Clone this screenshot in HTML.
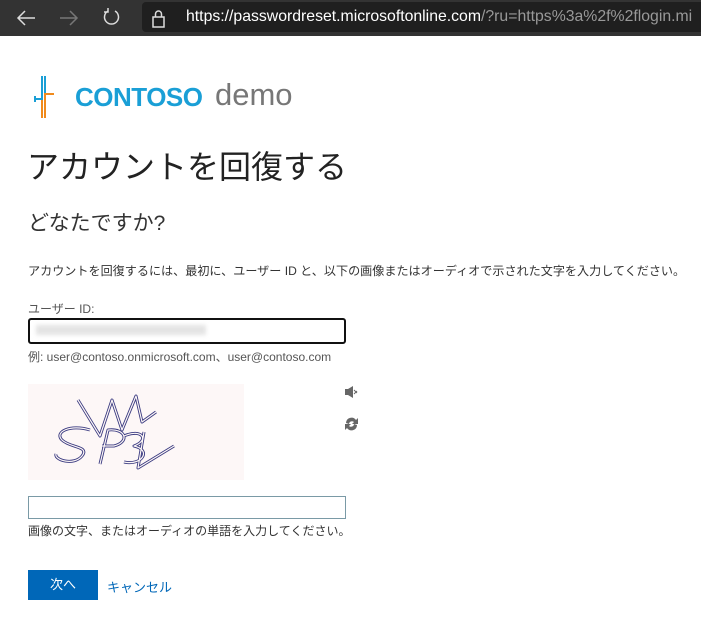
<!DOCTYPE html>
<html><head><meta charset="utf-8"><style>
body{margin:0;width:701px;height:635px;overflow:hidden;background:#fff;font-family:"Liberation Sans","Noto Sans CJK JP",sans-serif;color:#333;position:relative}
.a{position:absolute;white-space:nowrap}
</style></head><body>
<div class="a" style="left:0;top:0;width:701px;height:36px;background:#333"></div>
<div class="a" style="left:142px;top:2px;width:600px;height:30px;background:#1f1f1f;border-radius:4px"></div>
<svg class="a" style="left:0;top:0" width="180" height="36" fill="none" stroke-width="1.5">
<path d="M35 18H18M25 11l-7 7 7 7" stroke="#ddd"/>
<path d="M60 18h17M70 11l7 7-7 7" stroke="#777"/>
<path d="M108 11a7 7 0 1 0 7 0M108 8v4h-4" stroke="#ddd"/>
<rect x="153" y="17" width="11" height="10" stroke="#ddd"/><path d="M155.5 17v-3a3 3 0 0 1 6 0v3" stroke="#ddd"/>
</svg>
<div class="a" style="left:186px;top:8px;font-size:15.8px;color:#fff">https://passwordreset.microsoftonline.com<span style="color:#999">/?ru=https%3a%2f%2flogin.mi</span></div>
<svg class="a" style="left:34px;top:76px" width="24" height="42">
<rect x="7" y="0" width="2" height="24" fill="#1a9fd6"/><rect x="10" y="0" width="2" height="24" fill="#1a9fd6"/>
<rect x="0" y="22" width="9" height="2" fill="#1a9fd6"/><rect x="0" y="20" width="2" height="6" fill="#1a9fd6"/>
<rect x="7" y="24" width="2" height="18" fill="#f08a1c"/><rect x="10" y="24" width="2" height="18" fill="#f08a1c"/>
<rect x="10" y="17" width="10" height="2" fill="#f08a1c"/><rect x="10" y="17" width="2" height="8" fill="#f08a1c"/>
</svg>
<div class="a" style="left:75px;top:82px;font-size:26px;font-weight:bold;color:#1a9fd6;letter-spacing:-0.5px">CONTOSO</div>
<div class="a" style="left:215px;top:77px;font-size:31px;color:#777">demo</div>
<div class="a" style="left:27px;top:142px;font-size:32px;color:#222">アカウントを回復する</div>
<div class="a" style="left:28px;top:207px;font-size:21px;color:#333">どなたですか?</div>
<div class="a" style="left:28px;top:262px;font-size:12.1px;color:#333">アカウントを回復するには、最初に、ユーザー ID と、以下の画像またはオーディオで示された文字を入力してください。</div>
<div class="a" style="left:28px;top:300px;font-size:12px;color:#555">ユーザー ID:</div>
<div class="a" style="left:28px;top:318px;width:314px;height:22px;border:2px solid #111;border-radius:3px"></div>
<div class="a" style="left:36px;top:325px;width:170px;height:10px;background:#e4e4e4;filter:blur(2px)"></div>
<div class="a" style="left:28px;top:348px;font-size:12px;color:#555">例: user@contoso.onmicrosoft.com、user@contoso.com</div>
<svg class="a" style="left:28px;top:384px" width="216" height="96">
<rect width="216" height="96" fill="#fdf7f7"/>
<g fill="none" stroke="#3a3a80" stroke-width="3" stroke-linejoin="round">
<path d="M50 16l22 36 12-36 10 30 14-34 6 26 14-10"/>
<path d="M62 46c-20-6-36 2-28 10s28 6 20 16-28 4-26-2M72 80l8-34c18-2 22 12 6 16l-12 0M96 52c18-8 26 4 10 10 18 4 8 20-10 16M116 48l-6 36 36-22"/>
</g>
<g fill="none" stroke="#fdf7f7" stroke-width="1.2" stroke-linejoin="round">
<path d="M50 16l22 36 12-36 10 30 14-34 6 26 14-10"/>
<path d="M62 46c-20-6-36 2-28 10s28 6 20 16-28 4-26-2M72 80l8-34c18-2 22 12 6 16l-12 0M96 52c18-8 26 4 10 10 18 4 8 20-10 16M116 48l-6 36 36-22"/>
</g></svg>
<svg class="a" style="left:344px;top:386px" width="16" height="50" fill="#666">
<path d="M1 3h3l5-3v12l-5-3H1z"/><path d="M10 4l3 3M10 8l3-3" stroke="#666" fill="none"/>
<path d="M2 37a5.5 5.5 0 0 1 10-3l2-2v6h-6l2-2a3 3 0 0 0-5 2zM13 39a5.5 5.5 0 0 1-10 3l-2 2v-6h6l-2 2a3 3 0 0 0 5-2z"/>
</svg>
<div class="a" style="left:28px;top:496px;width:316px;height:21px;border:1px solid #7a9aa6"></div>
<div class="a" style="left:28px;top:522px;font-size:12px;color:#333">画像の文字、またはオーディオの単語を入力してください。</div>
<div class="a" style="left:28px;top:570px;width:70px;height:30px;background:#0067b8;color:#fff;font-size:13px;line-height:30px;text-align:center">次へ</div>
<div class="a" style="left:107px;top:577px;font-size:13px;color:#0067b8">キャンセル</div>
</body></html>
